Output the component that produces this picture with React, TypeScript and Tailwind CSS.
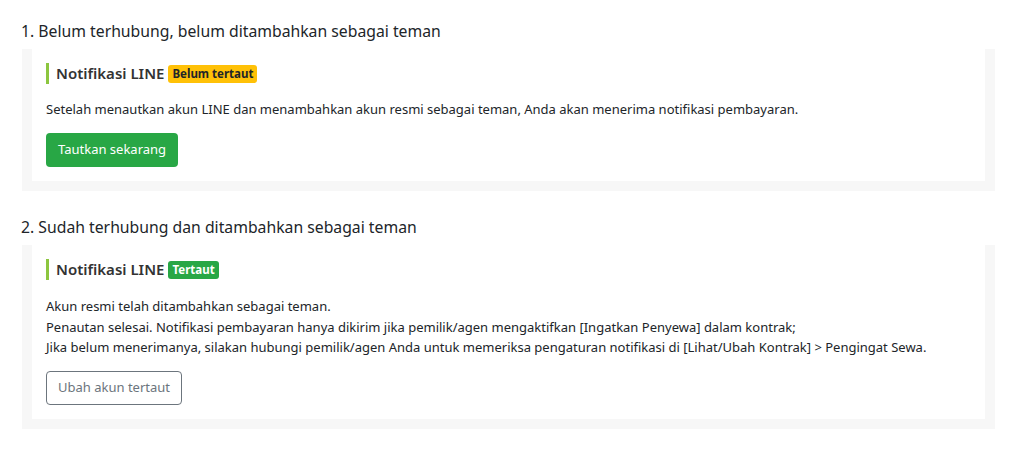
import React from "react";

const font = { fontFamily: '"Noto Sans", "Open Sans", sans-serif' };

const Title = ({ badge, linked }: { badge: string; linked: boolean }) => (
	<div className="flex h-[21px] items-center border-l-[3px] border-[#8cc63f] pl-[7px]">
		<span className="text-[15px] font-semibold text-[#333]">Notifikasi LINE</span>
		<span
			className={`ml-[4px] flex h-[18px] items-center rounded-[3px] px-[4px] text-[11.5px] font-bold ${
				linked ? "bg-[#28a745] text-white" : "bg-[#ffc107] text-[#212529]"
			}`}>
			{badge}
		</span>
	</div>
);

export default function App() {
	return (
		<div className="bg-white pl-[22px] pr-[20px] pt-[19px] pb-[20px] text-[#212529]" style={font}>
			<h3 className="text-[15.75px] leading-[24px] mb-[6px] -ml-[1px]">
				1. Belum terhubung, belum ditambahkan sebagai teman
			</h3>
			<div className="bg-[#f7f7f7] px-[10px] pb-[10px]">
				<div className="bg-white p-[14px]">
					<Title badge="Belum tertaut" linked={false} />
					<p className="mt-[15px] text-[13px] leading-[20.5px]">
						Setelah menautkan akun LINE dan menambahkan akun resmi sebagai teman, Anda
						akan menerima notifikasi pembayaran.
					</p>
					<button className="mt-[13.5px] h-[34px] rounded-[4px] bg-[#28a745] px-[12px] text-[13px] text-white">
						Tautkan sekarang
					</button>
				</div>
			</div>

			<h3 className="mt-[24px] text-[15.75px] leading-[24px] mb-[6px] -ml-[1px]">
				2. Sudah terhubung dan ditambahkan sebagai teman
			</h3>
			<div className="bg-[#f7f7f7] px-[10px] pb-[10px]">
				<div className="bg-white p-[14px]">
					<Title badge="Tertaut" linked />
					<p className="mt-[16px] text-[13px] leading-[20.5px]">
						Akun resmi telah ditambahkan sebagai teman.
						<br />
						Penautan selesai. Notifikasi pembayaran hanya dikirim jika pemilik/agen
						mengaktifkan [Ingatkan Penyewa] dalam kontrak;
						<br />
						Jika belum menerimanya, silakan hubungi pemilik/agen Anda untuk memeriksa
						pengaturan notifikasi di [Lihat/Ubah Kontrak] &gt; Pengingat Sewa.
					</p>
					<button className="mt-[13.5px] h-[34px] rounded-[4px] border border-[#6c757d] bg-white px-[11px] text-[13px] text-[#6c757d]">
						Ubah akun tertaut
					</button>
				</div>
			</div>
		</div>
	);
}
